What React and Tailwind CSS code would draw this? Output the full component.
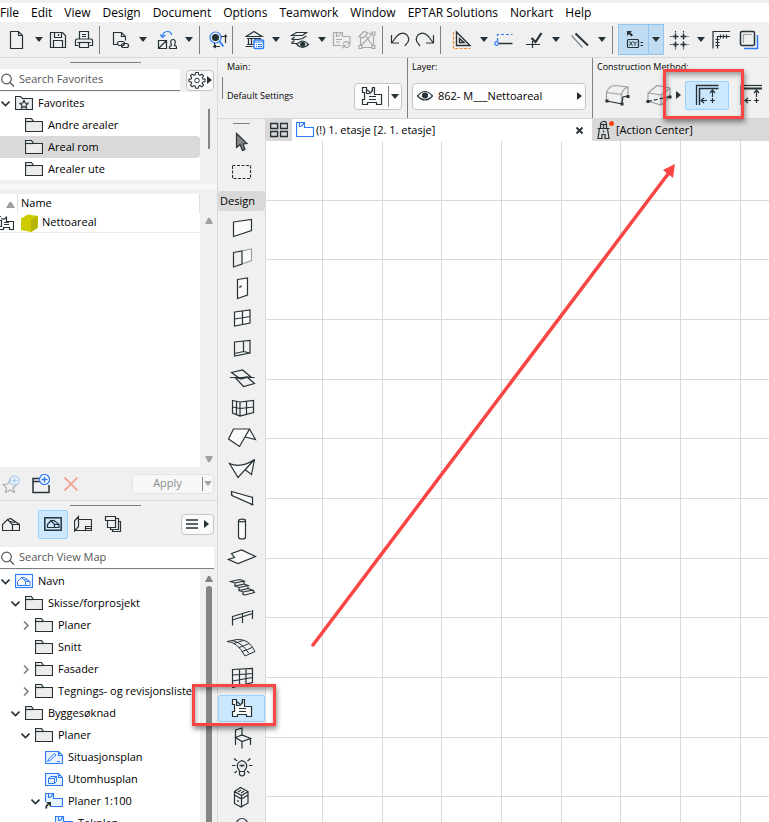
import { clsx } from 'clsx'

const INK = '#263238'
const BLUE = '#2f7df6'

function Svg({ size = 20, w, h, color = INK, className, children }) {
  const width = w || size
  const height = h || size
  return (
    <svg
      width={width}
      height={height}
      viewBox={`0 0 ${width} ${height}`}
      fill="none"
      stroke={color}
      strokeWidth="1.2"
      className={clsx('shrink-0', className)}
      aria-hidden="true"
    >
      {children}
    </svg>
  )
}

function Caret({ color = INK }) {
  return (
    <Svg w={8} h={5} color="none">
      <path d="M0 0h8L4 5z" fill={color} />
    </Svg>
  )
}

function RightCaret() {
  return (
    <Svg w={5} h={8} color="none">
      <path d="M0 0v8L5 4z" fill={INK} />
    </Svg>
  )
}

/* ---------- toolbar ---------- */

const toolbarIcons = {
  file: <path d="M3.5 1.5h8l4 4v13h-12zM11.5 1.5v4h4" />,
  save: <path d="M2.5 2.5h12l3 3v12h-15zM6.5 2.5v5h7v-5M5.5 17.5v-7h9v7M10.5 4v2" />,
  print: (
    <>
      <path d="M5.5 9V1.5h9V9M8 4.5h4M8 6.5h4" />
      <path d="M4.5 15.5h-3v-5q0-1.5 1.5-1.5h14q1.5 0 1.5 1.5v5h-3" />
      <path d="M5.5 12.5h9v5h-9z" />
      <path d="M3.5 12.5h13" />
    </>
  ),
  link: (
    <>
      <path d="M6 14.5H2.5v-12h8l4 4v4M10.5 2.5v4h4" />
      <rect x="6.5" y="11.5" width="7" height="4" rx="2" />
      <rect x="10.5" y="13.5" width="7" height="4" rx="2" />
    </>
  ),
  convert: (
    <>
      <path d="M1.5 10.5h8v8h-8zM1.5 18.5l8-8" />
      <path d="M12.5 18.5v-2l2-1q-2-6 1.500-6t1.500 6l2 1v2z" />
      <path d="M5.500 7q0-5.500 5-5.500q4 0 4 3.500M3 4.500l2.500 3l3-2.500" stroke={BLUE} />
    </>
  ),
  find: (
    <>
      <circle cx="7.500" cy="7.500" r="5.500" stroke={BLUE} />
      <path d="M11.500 11.500l4 5" stroke={BLUE} strokeWidth="1.800" />
      <circle cx="7.500" cy="7.500" r="3" fill={INK} />
      <path d="M17.500 13V6M13 6.500h5M6.500 13v4.500M5 16.500h7" />
      <path d="M5 16.500l3-2v4zM17.500 4l-2 3h4z" fill={INK} stroke="none" />
    </>
  ),
  building: (
    <>
      <path d="M1 6.500L9 1.500l8 5zM2 8.500h14M3.500 9v5M6.500 9v5M10.500 9v2M14.500 9v1M2 14.500h6M0.500 16.500h7" />
      <rect x="9" y="10" width="9.500" height="8.500" rx="1" fill="#fff" stroke={BLUE} strokeWidth="1.500" />
      <path d="M9 12h9.500M11 14.500h1M13 14.500h4M11 16.500h1M13 16.500h4" stroke={BLUE} />
    </>
  ),
  layers: (
    <>
      <path d="M1.500 5.500l5-3h10l-4 3zM1.500 9.500l3-2.500M1.500 9.500h7l4-1l4-2.500M1.500 13l3-2.500M1.500 13.500h6" />
      <path d="M7 14.500q5.500-7 11.500 0q-6 6-11.500 0z" fill="#f0f0f0" />
      <circle cx="12.700" cy="14.300" r="2" fill={INK} />
    </>
  ),
  zoneUpdate: (
    <>
      <path d="M9 15.500H1.500v-13h9v4h7.500v5M4.500 2.500v4q4-.5 4.500-4M4 9.500h6M4 12h4" />
      <path d="M11 14q2-4 6-1.500M18 11v3h-3M18 15q-2 4-6 1.500M11 18.500v-3h3" />
    </>
  ),
  zoneEdit: (
    <>
      <path d="M3.500 8v8M5 17.500h10M16.500 15V5M15 3.500h-3" />
      <path d="M2 6.500l5-5l4 1.500l-5 5zM8.500 5.500L15 15M4 15.500l7-7l4-5" />
      <path d="M15 2h3v3h-3zM15 15.500h3v3h-3zM2 15.500h3v3H2z" />
    </>
  ),
  undo: <path d="M1.500 5v8h7.500M2 12.500L7 6q5-5 10-1q4 5-1 9.500l-1 1.500" />,
  redo: <path d="M18.500 5v8H11M18 12.500L13 6Q8 1 3 5q-4 5 1 9.500L5 16" />,
  triangle: (
    <>
      <path d="M4.500 2v13.500H18zM7.500 8.500v4H12z" strokeWidth="1.400" />
      <path d="M1.500 2v16.500h17" stroke="#f18a2b" strokeDasharray="3 1.500" />
    </>
  ),
  guide: (
    <>
      <path d="M3.500 11V4.500h15" stroke={BLUE} strokeDasharray="3 2" />
      <path d="M4.500 13.500h14" strokeWidth="1.500" />
      <circle cx="2.700" cy="13.500" r="1.800" stroke={BLUE} />
    </>
  ),
  snap: (
    <>
      <path d="M2 14.500h14M8.500 11v7" />
      <path d="M7.500 8l4 4l6-9" strokeWidth="2.200" />
    </>
  ),
  parallel: (
    <>
      <path d="M1.500 5.500l11 12" stroke="#78858b" />
      <path d="M5.500 3.500l12.500 12" strokeWidth="2" />
    </>
  ),
  grid: (
    <>
      <path d="M3.500 6.500h6M11.500 6.500h6M3.500 14.500h6M11.500 14.500h6M6.500 3.500v6M14.500 3.500v6M6.500 11.500v6M14.500 11.500v6" strokeWidth="1.500" />
      <path d="M1 6.500h1.500M18.500 6.500h1M1 14.500h1.500M18.500 14.500h1M6.500 1v1.500M14.500 1v1.500M6.500 18.500v1M14.500 18.500v1" />
    </>
  ),
  ruler: <path d="M2 18.500v-17h17M6.500 18.500V6.500h12.500M9.500 4.500v4M12.500 4.500v4M15.500 4.500v4M4.500 9.500h4M4.500 12.500h4M4.500 15.500h4" />,
  square: (
    <>
      <path d="M5 18.500h13.500V5" stroke={BLUE} strokeWidth="1.500" />
      <rect x="1.500" y="1.500" width="14" height="14" rx="1.500" strokeWidth="1.500" />
      <path d="M4.500 13V4.500H13" stroke="#9aa2a6" />
    </>
  ),
}

const leftTools = [
  { icon: 'file', margin: 'ml-[7px]' },
  { caret: true, margin: 'ml-2' },
  { icon: 'save', margin: 'ml-[5px]' },
  { icon: 'print', margin: 'ml-1.5' },
  { line: true, margin: 'ml-[5px]' },
  { icon: 'link', margin: 'ml-[11px]' },
  { caret: true, margin: 'ml-2' },
  { icon: 'convert', margin: 'ml-2.5' },
  { caret: true, margin: 'ml-2' },
  { line: true, margin: 'ml-1.5' },
  { icon: 'find', margin: 'ml-2' },
  { line: true, margin: 'ml-1' },
  { icon: 'building', margin: 'ml-3' },
  { caret: true, margin: 'ml-[7px]' },
  { icon: 'layers', margin: 'ml-2.5' },
  { caret: true, margin: 'ml-2' },
  { icon: 'zoneUpdate', margin: 'ml-1.5', off: true },
  { icon: 'zoneEdit', margin: 'ml-[5px]', off: true },
  { line: true, margin: 'ml-[5px]' },
  { icon: 'undo', margin: 'ml-[7px]' },
  { icon: 'redo', margin: 'ml-[5px]' },
  { line: true, margin: 'ml-[5px]' },
  { icon: 'triangle', margin: 'ml-[11px]' },
  { caret: true, margin: 'ml-2' },
  { icon: 'guide', margin: 'ml-1.5' },
  { icon: 'snap', margin: 'ml-2.5' },
  { caret: true, margin: 'ml-2' },
  { icon: 'parallel', margin: 'ml-2.5' },
  { caret: true, margin: 'ml-2' },
  { line: true, margin: 'ml-1.5' },
]

const rightTools = [
  { icon: 'grid', margin: 'ml-[5px]' },
  { caret: true, margin: 'ml-2' },
  { icon: 'ruler', margin: 'ml-1.5' },
  { icon: 'square', margin: 'ml-2' },
]

function Tool({ item }) {
  if (item.line) return <span className={clsx('h-7 w-px shrink-0 bg-[#808080]', item.margin)} />
  if (item.caret) {
    return (
      <button type="button" aria-label="More" className={clsx('shrink-0', item.margin)}>
        <Caret />
      </button>
    )
  }
  return (
    <button type="button" aria-label={item.icon} className={clsx('shrink-0', item.margin)}>
      <Svg color={item.off ? '#a9a9a9' : INK}>{toolbarIcons[item.icon]}</Svg>
    </button>
  )
}

function Toolbar() {
  return (
    <div className="flex h-9 shrink-0 items-center border-b border-[#d9d9d9]">
      {leftTools.map((item, i) => (
        <Tool key={i} item={item} />
      ))}
      <div className="ml-[5px] flex h-[31px] shrink-0 border border-[#92c5ee] bg-[#c0dcf3]">
        <button type="button" aria-label="Coordinates" className="flex w-[30px] items-center justify-center border-r border-[#92c5ee]">
          <Svg>
            <path d="M3 1h5l-1.500 1.500l2.500 2.500l-1.500 1.500L5 4L3 6z" fill={INK} stroke="none" />
            <rect x="3.500" y="9.500" width="11" height="8" rx="1" />
            <path d="M5.500 11.500l3 4M8.500 11.500l-3 4M9.500 11.500l1.500 2M13 11.500l-2 2v2M16.500 12.500h2.500M16.500 15.500h2.500" strokeWidth="1" />
          </Svg>
        </button>
        <button type="button" aria-label="More" className="flex w-[14px] items-center justify-center">
          <Caret />
        </button>
      </div>
      {rightTools.map((item, i) => (
        <Tool key={i} item={item} />
      ))}
    </div>
  )
}

const menus = ['File', 'Edit', 'View', 'Design', 'Document', 'Options', 'Teamwork', 'Window', 'EPTAR Solutions', 'Norkart', 'Help']

function MenuBar() {
  return (
    <nav className="mt-[3px] flex h-[19px] shrink-0 items-center gap-3 bg-white text-[12px]">
      {menus.map((m) => (
        <button type="button" key={m} className="shrink-0 whitespace-nowrap">
          {m}
        </button>
      ))}
    </nav>
  )
}

/* ---------- left panels ---------- */

const treeIcons = {
  folder: (
    <>
      <path d="M.5 14.500V1.500h6l2 3h9v10z" fill="#ececec" />
      <path d="M.5 4.500h8" />
    </>
  ),
  favorites: (
    <>
      <path d="M.5 14.500V1.500h5l2 2h10v11z" fill="#ececec" />
      <path d="M9 5.500l1.200 2.500l2.800.3l-2 1.900l.5 2.800L9 11.700l-2.500 1.300l.5-2.800l-2-1.900l2.800-.3z" />
    </>
  ),
  viewMap: (
    <g stroke={BLUE}>
      <rect x=".5" y="1.500" width="17" height="13" />
      <path d="M2.500 12.500V8.500l4-4l4 4v4zM6.500 4.500h3l5.500 4v4h-4.500M10.500 8.500h4.500M8.500 6.500l4 .5" strokeWidth="1" />
    </g>
  ),
  drawing: (
    <g stroke={BLUE}>
      <path d="M.5 2.500h13l4 4v8H.5zM13.500 2.500v4h4" fill="#eaf4fe" />
      <path d="M2.500 12.500l1-2.500l6-5.500l1.500 1.500l-6 5.500zM12 12.500h3" strokeWidth="1" />
    </g>
  ),
  box3d: (
    <g stroke={BLUE}>
      <path d="M.5 2.500h13l4 4v8H.5zM13.500 2.500v4h4" fill="#eaf4fe" />
      <path d="M3.500 7.500h6v5h-6zM3.500 7.500l2-2h6l-2 2M11.500 5.500v5l-2 2" strokeWidth="1" />
    </g>
  ),
  story: (
    <g stroke={BLUE}>
      <path d="M.5 14.500V1.500h8v5h9v8z" fill="#eaf4fe" />
      <path d="M3.500 1.500v4q3.500 0 4-4" />
    </g>
  ),
  storyLink: (
    <g stroke={BLUE}>
      <path d="M.5 13.500V.5h8v5h9v8z" fill="#eaf4fe" />
      <path d="M3.500.5v4q3.500 0 4-4" />
      <path d="M0 9h5.500v7H0z" fill="#fff" stroke="none" />
      <path d="M1.500 15.500q-1-3 2-4.500" stroke={INK} strokeWidth="1.800" />
      <path d="M1 9h5v5z" fill={INK} stroke="none" />
    </g>
  ),
}

const indents = ['pl-0', 'pl-[10px]', 'pl-5', 'pl-[30px]', 'pl-10']

function TreeRow({ level, icon, label, open, selected }) {
  return (
    <li>
      <button
        type="button"
        className={clsx('flex h-[22px] w-full items-center rounded-r-sm text-left', indents[level], selected && 'bg-[#d9d9d9]')}
      >
        <span className="flex w-[15px] shrink-0 pl-px">
          {open !== undefined && (
            <Svg size={9} color={open ? INK : '#808080'}>
              <path d={open ? 'M.5 2.500l4 4l4-4' : 'M3 0.500l4 4l-4 4'} strokeWidth="1.600" />
            </Svg>
          )}
        </span>
        <Svg w={18} h={16}>{treeIcons[icon]}</Svg>
        <span className="ml-[5px] whitespace-nowrap">{label}</span>
      </button>
    </li>
  )
}

const favorites = [
  { level: 0, icon: 'favorites', label: 'Favorites', open: true },
  { level: 1, icon: 'folder', label: 'Andre arealer' },
  { level: 1, icon: 'folder', label: 'Areal rom', selected: true },
  { level: 1, icon: 'folder', label: 'Arealer ute' },
]

const views = [
  { level: 0, icon: 'viewMap', label: 'Navn', open: true },
  { level: 1, icon: 'folder', label: 'Skisse/forprosjekt', open: true },
  { level: 2, icon: 'folder', label: 'Planer', open: false },
  { level: 2, icon: 'folder', label: 'Snitt' },
  { level: 2, icon: 'folder', label: 'Fasader', open: false },
  { level: 2, icon: 'folder', label: 'Tegnings- og revisjonsliste', open: false },
  { level: 1, icon: 'folder', label: 'Byggesøknad', open: true },
  { level: 2, icon: 'folder', label: 'Planer', open: true },
  { level: 3, icon: 'drawing', label: 'Situasjonsplan' },
  { level: 3, icon: 'box3d', label: 'Utomhusplan' },
  { level: 3, icon: 'storyLink', label: 'Planer 1:100', open: true },
  { level: 4, icon: 'story', label: 'Takplan' },
]

function SearchBox({ placeholder }) {
  return (
    <label className="flex h-[22px] flex-1 items-center border-b border-[#7f7f7f] bg-white">
      <Svg size={16} color="#555">
        <circle cx="6.500" cy="7" r="4.800" />
        <path d="M10 10.500l4 4" />
      </Svg>
      <input
        type="search"
        aria-label={placeholder}
        placeholder={placeholder}
        className="ml-[3px] w-full min-w-0 bg-transparent outline-none placeholder:text-[#555]"
      />
    </label>
  )
}

function ScrollArrow({ up, dark }) {
  return (
    <Svg w={8} h={6} color="none">
      <path d={up ? 'M0 6h8L5 0H3z' : 'M0 0h8L5 6H3z'} fill={dark ? '#858585' : '#a0a0a0'} />
    </Svg>
  )
}

function Handle() {
  return <div className="ml-[70px] h-px w-[71px] bg-[#808080]" />
}

function ZoneGlyph() {
  return (
    <Svg w={22} h={20}>
      <path
        d="M5.500 1.500h-4v5h2v7h-2v5h5v-2h9v2h5v-10h-7v-7h-2q0 6-4 6h-2z"
        fill="#fafafa"
      />
      <path d="M5.500 3.500l4 3M11.500 1.500v4M8 10.500h7M8 13.500h7" />
    </Svg>
  )
}

function FavoritesPanel() {
  return (
    <section className="shrink-0 border-b border-[#d9d9d9]">
      <div className="pt-1">
        <Handle />
      </div>
      <div className="mt-1.5 flex items-center">
        <SearchBox placeholder="Search Favorites" />
        <button type="button" aria-label="Favorites settings" className="mr-[3px] ml-1.5 flex h-[21px] w-7 items-center justify-center gap-px rounded border border-[#c6c6c6] bg-[#fafafa]">
          <Svg size={18}>
            <path
              d="M7.800 1.500h2.400l.5 2.200l1.300.6l1.900-1.200l1.600 1.600l-1.200 1.900l.6 1.300l2.100.4v2.200l-2.100.5l-.6 1.300l1.200 1.900l-1.600 1.600l-1.900-1.200l-1.300.6l-.5 2.100H7.800l-.5-2.100l-1.300-.6l-1.900 1.200l-1.600-1.600l1.200-1.900l-.6-1.300L1 10.500V8.300l2.100-.4l.6-1.300l-1.200-1.900l1.600-1.600l1.900 1.200l1.300-.6z"
              strokeWidth="1.100"
            />
            <circle cx="9" cy="9.500" r="2.300" strokeWidth="1" />
          </Svg>
          <RightCaret />
        </button>
      </div>
      <div className="mt-px flex">
        <ul className="min-w-0 flex-1 bg-white">
          {favorites.map((row) => (
            <TreeRow key={row.label} {...row} />
          ))}
        </ul>
        <div className="flex w-[17px] justify-center pt-[17px]">
          <div className="h-10 w-0.5 bg-[#858585]" />
        </div>
      </div>
      <div className="mt-1 mb-[5px] h-[5px] bg-[#f8f8f8]" />
      <div className="flex h-[273px]">
        <div className="min-w-0 flex-1 bg-white">
          <div className="flex h-[19px] items-center border-r border-[#e0e0e0]">
            <span className="flex w-[18px] justify-end self-stretch border-r border-[#e5e5e5] pt-2 pr-0.5">
              <Svg w={9} h={6} color="none">
                <path d="M0 6h9L5.500 0h-2z" fill="#a0a0a0" />
              </Svg>
            </span>
            <span className="ml-[3px]">Name</span>
          </div>
          <button type="button" className="flex h-5 w-full items-center border-b border-[#ececec] text-left">
            <Svg w={14} h={16}>
              <path d="M0 1.500h1M6.500 1.500v5h7v8h-4v-2h-6v2H0M0 5.500h1.500v6H0M1 3.500q4 2 5.500-2M4 7.500h5M4 9.500h5" />
            </Svg>
            <Svg w={20} h={18} color="none" className="ml-[7px]">
              <path d="M0 4.500L7 .5l10 1.500l-.5 12L10 18L0 16z" fill="#cccb00" />
              <path d="M10 6l7-4l-.5 12L10 18z" fill="#b5b400" />
            </Svg>
            <span className="ml-px">Nettoareal</span>
          </button>
        </div>
        <div className="flex w-[17px] flex-col items-center justify-between pt-6 pb-[5px]">
          <ScrollArrow up />
          <ScrollArrow />
        </div>
      </div>
      <div className="flex h-[33px] items-center pr-[3px] pl-[2px]">
        <button type="button" aria-label="New favorite" disabled>
          <Svg size={18} color="#a9b0b3">
            <path d="M8 4.500l2 4.500l5 .5l-4 3.500l1.500 4.500L8 15l-4.500 2.500L4.500 13L1 9.500l5-.5z" />
            <circle cx="12.500" cy="5.500" r="4.500" fill="#f0f0f0" stroke="#9ec6fb" />
            <path d="M12.500 3v5M10 5.500h5" stroke="#9ec6fb" />
          </Svg>
        </button>
        <button type="button" aria-label="New folder" className="ml-3">
          <Svg size={20}>
            <path d="M8 4.500H1v14h16V11M1 7.500h7" strokeWidth="1.500" />
            <circle cx="12.500" cy="5.500" r="5" fill="#fff" stroke={BLUE} />
            <path d="M12.500 2.500v6M9.500 5.500h6" stroke={BLUE} strokeWidth="1.500" />
          </Svg>
        </button>
        <button type="button" aria-label="Delete" className="ml-3" disabled>
          <Svg size={14} color="#f7a292">
            <path d="M.5 .5l13 13M13.500 .5l-13 13" strokeWidth="1.800" />
          </Svg>
        </button>
        <div className="ml-auto flex h-5 w-[82px] rounded-sm border border-[#e3e3e3] bg-[#f8f8f8]">
          <button type="button" className="flex-1 text-[#8c8c8c]" disabled>
            Apply
          </button>
          <button type="button" aria-label="Apply options" className="my-0.5 border-l border-[#8c8c8c] px-px" disabled>
            <Caret color="#a0a0a0" />
          </button>
        </div>
      </div>
    </section>
  )
}

function ViewMapPanel() {
  return (
    <section className="flex min-h-0 flex-1 flex-col">
      <div className="pt-1">
        <Handle />
      </div>
      <div className="mt-[3px] flex h-[30px] shrink-0 items-center pr-[3px] pl-[2px]">
        <button type="button" aria-label="Project map">
          <Svg size={18}>
            <path d="M.5 15.500v-6l5-5l5 5v6zM5.500 4.500l3-1l9 6v6h-7M10.500 9.500h7M8 6.500l5 1" />
          </Svg>
        </button>
        <button type="button" aria-label="View map" className="ml-[18px] flex h-[29px] w-[30px] items-center justify-center rounded-xs border border-[#99d1ff] bg-[#cce8ff]">
          <Svg size={18}>
            <rect x=".8" y="2.800" width="16.400" height="12.400" strokeWidth="1.500" />
            <path d="M3.500 12.500v-3l3.500-4l3.500 4v3zM7 5.500h3l5 4v3h-4.500M10.500 9.500h4.500" />
          </Svg>
        </button>
        <button type="button" aria-label="Layout book" className="ml-1.5">
          <Svg size={18}>
            <path d="M.5 6l4-4.500v10L.5 16zM4.500 4.500h13v11h-16M11.500 15.500v-4h6M11.500 13.500h6" />
          </Svg>
        </button>
        <button type="button" aria-label="Publisher" className="ml-3">
          <Svg size={18}>
            <path d="M1.500 1.500h10v4h-10zM3.500 5.500v7h8v-7M11.500 3.500h3v11h-8v-2M14.500 6.500h2v10h-8v-2" />
          </Svg>
        </button>
        <button type="button" aria-label="View map menu" className="ml-auto flex h-[21px] w-[33px] items-center justify-center gap-1.5 rounded border border-[#c6c6c6] bg-[#fafafa]">
          <Svg w={12} h={10}>
            <path d="M0 1h12M0 5h12M0 9h12" strokeWidth="1.400" />
          </Svg>
          <RightCaret />
        </button>
      </div>
      <div className="mt-2 mr-[3px] flex shrink-0">
        <SearchBox placeholder="Search View Map" />
      </div>
      <div className="mt-px flex min-h-0 flex-1">
        <ul className="min-w-0 flex-1 overflow-hidden bg-white">
          {views.map((row, i) => (
            <TreeRow key={i} {...row} />
          ))}
        </ul>
        <div className="flex w-[17px] flex-col items-center gap-1 pt-1.5">
          <ScrollArrow up dark />
          <div className="w-1.5 flex-1 rounded-t bg-[#858585]" />
        </div>
      </div>
    </section>
  )
}

/* ---------- info box ---------- */

function Marker({ className }) {
  return (
    <span
      className={clsx(
        'pointer-events-none absolute z-10 border-3 border-[#fa4545] shadow-[1px_3px_5px_rgba(0,0,0,0.45),inset_1px_3px_5px_rgba(0,0,0,0.35)]',
        className,
      )}
    />
  )
}

function InfoBox() {
  return (
    <div className="flex h-[61px] shrink-0 border-b border-[#d9d9d9] text-[9px]">
      <div className="flex w-[189px] shrink-0 pl-1">
        <span className="mt-[19px] h-[22px] w-px bg-[#808080]" />
        <div className="ml-1 flex flex-1 flex-col pt-0.5">
          <span>Main:</span>
          <div className="mt-[9px] flex items-center justify-between pr-[5px]">
            <span>Default Settings</span>
            <div className="flex h-[27px] w-12 rounded border border-[#c6c6c6] bg-[#fdfdfd]">
              <button type="button" aria-label="Zone settings" className="flex flex-1 items-center justify-center">
                <ZoneGlyph />
              </button>
              <button type="button" aria-label="More" className="my-0.5 border-l border-[#808080] px-0.5">
                <Caret />
              </button>
            </div>
          </div>
        </div>
      </div>
      <div className="w-[185px] shrink-0 border-l border-[#808080] pt-0.5 pl-1">
        <span>Layer:</span>
        <button type="button" className="mt-[9px] flex h-[27px] w-[174px] items-center rounded border border-[#c6c6c6] bg-[#fdfdfd] pr-[3px] pl-1 text-[11px]">
          <Svg w={16} h={12}>
            <path d="M.5 6q7.500-9 15 0q-7.500 8-15 0z" />
            <circle cx="8" cy="5.500" r="2.500" fill={INK} />
          </Svg>
          <span className="mr-auto ml-[5px]">862- M___Nettoareal</span>
          <RightCaret />
        </button>
      </div>
      <div className="min-w-0 flex-1 border-l border-[#808080] pt-0.5 pl-1">
        <span>Construction Method:</span>
        <div className="mt-[7px] flex items-center">
          <button type="button" aria-label="Manual" className="ml-2 shrink-0">
            <Svg w={26} h={24}>
              <path d="M1.500 17V9.500Q4 2.500 10 2.500l13 1.500v10M1.500 9.500l15 2V21M16.500 11.500q1-5.500 6.500-7.500" stroke="#9aa0a3" />
              <path d="M2 18l15 3M17 20l1-6l5-1" />
              <path d="M.5 16.500h3v3h-3zM15.500 19.500h3v3h-3zM21.500 12h3v3h-3z" fill={INK} stroke="none" />
            </Svg>
          </button>
          <button type="button" aria-label="Inner edge" className="ml-[15px] flex shrink-0 items-center gap-1">
            <Svg w={26} h={24}>
              <path d="M2 18v-8l9-7.500l13 2.500v9l-9 8l-13-4M2 10l13 2v10M15 12l9-7" stroke="#9aa0a3" />
              <path d="M2 18.500l22-5" strokeDasharray="4 2" />
              <path d="M.5 17h3v3h-3zM22.500 12.500h3v3h-3z" fill={INK} stroke="none" />
            </Svg>
            <RightCaret />
          </button>
          <div className="relative ml-1 shrink-0">
            <button type="button" aria-label="Reference line" className="flex h-[29px] w-11 items-center justify-center rounded-xs border border-[#99d1ff] bg-[#cce8ff]">
              <EdgeGlyph />
            </button>
            <Marker className="-top-3 -left-[22px] h-[50px] w-[81px]" />
          </div>
          <button type="button" aria-label="Outer edge" className="ml-2.5 shrink-0">
            <EdgeGlyph bold />
          </button>
        </div>
      </div>
    </div>
  )
}

function EdgeGlyph({ bold }) {
  return (
    <Svg w={24} h={22}>
      {bold ? (
        <>
          <path d="M1 1.500h22" />
          <path d="M3 4.500h20" strokeWidth="2" />
          <path d="M1.500 1v20" stroke="#8a9093" />
        </>
      ) : (
        <>
          <path d="M1.500 21V1.500h22" strokeWidth="1.300" />
          <path d="M4.500 21V4.500h19" strokeWidth="1.500" />
        </>
      )}
      <path d="M17.500 6v7M6 16.500h6M15 16.500h5M17.500 14v5" />
      <path d="M15 9l2.500-3l2.500 3M9 14l-3 2.500l3 2.500" />
    </Svg>
  )
}

/* ---------- toolbox ---------- */

const toolbox = [
  { name: 'Wall', art: <path d="M6.500 9l18-2.500v11l-18 6z" fill="#fafafa" /> },
  {
    name: 'Partial wall',
    art: (
      <>
        <path d="M15 8l9.500-2v11.500L15 21" stroke="#9aa0a3" fill="#fafafa" />
        <path d="M6.500 9.500l8.500-1.500v13l-8.500 3z" />
      </>
    ),
  },
  { name: 'Door', art: <path d="M10.500 6.500l10-1.500v17l-10 3.500zM13 15v-1.500l2-.5" fill="#fafafa" /> },
  { name: 'Window', art: <path d="M7.500 9l15.500-2v13l-15.500 3zM15.500 8v13.500M7.500 16l15.500-2.500" fill="#fafafa" /> },
  { name: 'Corner window', art: <path d="M7.500 9L23 7.500v12.500l-15.500 3zM16.500 8v10.500M7.500 20.500l9-2l6.500 1.500" /> },
  {
    name: 'Skylight',
    art: (
      <>
        <path d="M4.500 9.500l11-2.500l8 6.500l-10 2.500z" />
        <path d="M9 15.500l11-1.500l7.500 6.500l-11 3zM3 14.500h24.500" />
      </>
    ),
  },
  { name: 'Curtain wall', art: <path d="M5.500 7.500L13 9l13.500-1.500v12L13 23l-7.500-3zM13 9v14M9.500 8.500v13M19.500 8.500v13M5.500 14l7.500 1.500l13.500-1.500" /> },
  { name: 'Roof', art: <path d="M6.500 6h16L12.500 23.500L1.500 16zM22.500 6l6 10.500L18 14" fill="#fafafa" /> },
  { name: 'Shell', art: <path d="M2.500 10.500q12 5 25-4l-16.500 18zM27.500 6.500l-3 15l-6-4.500" fill="#fafafa" /> },
  { name: 'Beam', art: <path d="M4.500 8.500l21 6v7l-20.500-9zM4.500 8v4.500M25.500 13.500v9M4.500 12.500h2M23.500 21.500h3" fill="#fafafa" /> },
  {
    name: 'Column',
    art: (
      <>
        <path d="M11.500 7.500V24q0 2 3.500 2t3.500-2V7.500" fill="#fafafa" />
        <ellipse cx="15" cy="7.500" rx="3.500" ry="1.300" />
      </>
    ),
  },
  { name: 'Slab', art: <path d="M4.500 10.500l10-3.500l14 6.500l-17.500 7l-9.500-4l6-2z" fill="#fafafa" /> },
  {
    name: 'Stair',
    art: (
      <path d="M3.500 8.500l9.500-2l4 1.500l-9 2zM8 10v3l9-2V8M8 13l4 1.500l9-2l-4-1.500M12 14.500v3l9-2v-3M12 17.500l4 1.500l9.500-2l-4.500-1.500M16 19v2.500l2 .5l9.500-2.500l-2-2.500" />
    ),
  },
  { name: 'Railing', art: <path d="M5.500 13.500l20-6M5.500 17l20-6.500M5.500 13v9.500M15.500 10.500V20M25.500 7v9" /> },
  { name: 'Mesh', art: <path d="M0 8.500q10 0 18 14.500l10-4.500Q22 5.500 10 6.500zM5 7.500q10 2 17 13M7 10.500q6-2 9-3M12 14.500q6-2 10-4M15 18.500q6-2 10-4" strokeWidth="1" /> },
  { name: 'Morph', art: <path d="M5.500 6.500l20-1v14l-20 5zM12.500 6v16.500M19 6v15M5.500 12l20-1.500M5.500 18l20-3.500" /> },
  { name: 'Zone' },
  { name: 'Object', art: <path d="M8.500 22V7l6.500-2v8M8.500 14.500l6.500-2.500l8.500 3.500l-8.500 3zM15 18.500v7M23.500 15.500v6.500" /> },
  {
    name: 'Lamp',
    art: (
      <>
        <path d="M12.500 18.500q0-1.500-1.500-3q-2.500-5.500 4-8q6.500 2.500 4 8q-1.500 1.500-1.500 3zM12.500 18.500v3q2.500 3 5 0v-3M12.500 13l1.500-1l1 1.500l1-1.500l1.500 1" />
        <path d="M5 12.500h3.500M22 12.500h3.500M7 5.500l3 2.500M23.500 5.500l-3 2.500M7.500 20l2.500-2M22.500 20l-2.500-2" />
      </>
    ),
  },
  { name: 'Equipment', art: <path d="M7.500 8.500l6-4l7.500 4v11.500l-7 4l-6.500-3.500zM7.500 8.500l7 4l6.500-4M14.500 12.500v11M7.500 12l7 4l6.500-4M11 9l3-2M14 10l3-2M11 17v2" /> },
  { name: 'More', art: <circle cx="15" cy="11" r="5.500" /> },
]

function Toolbox() {
  return (
    <aside className="flex w-12 shrink-0 flex-col border-r border-[#d9d9d9]">
      <div className="mx-auto mt-1 h-px w-[17px] shrink-0 bg-[#808080]" />
      <button type="button" aria-label="Arrow" className="mt-[3px] flex h-[30px] shrink-0 items-center justify-center">
        <Svg w={14} h={20}>
          <path d="M1.500 1.500v14l3.500-3l2.500 6l2.500-1l-2-5.500l4-.5z" fill="#858585" />
        </Svg>
      </button>
      <button type="button" aria-label="Marquee" className="flex h-[30px] shrink-0 items-center justify-center">
        <Svg w={20} h={16}>
          <rect x=".5" y="1.500" width="18" height="13" strokeDasharray="3 1.500" />
        </Svg>
      </button>
      <button type="button" className="mt-1 mb-0.5 h-5 shrink-0 rounded bg-[#d9d9d9] pl-0.5 text-left">
        Design
      </button>
      {toolbox.map((t) =>
        t.name === 'Zone' ? (
          <div key={t.name} className="relative flex h-[30px] shrink-0 items-center">
            <button type="button" aria-label={t.name} className="flex h-[27px] w-full items-center justify-center rounded-xs border border-[#99d1ff] bg-[#cce8ff]">
              <ZoneGlyph />
            </button>
            <Marker className="-top-[9px] -left-[26px] h-[42px] w-[84px]" />
          </div>
        ) : (
          <button type="button" key={t.name} aria-label={t.name} className="flex h-[30px] shrink-0 items-center justify-center">
            <Svg size={30}>{t.art}</Svg>
          </button>
        ),
      )}
    </aside>
  )
}

/* ---------- drawing area ---------- */

const PITCH = 59.65
const lines = Array.from({ length: 40 }, (_, i) => i)

function Canvas() {
  return (
    <main className="flex min-w-0 flex-1 flex-col">
      <div className="flex h-[22px] shrink-0 bg-[#d9d9d9]">
        <button type="button" aria-label="Tab overview" className="flex w-[26px] shrink-0 items-center justify-center">
          <Svg w={18} h={16}>
            <path d="M.6 1.500h7v5h-7zM10.600 1.500h7v5h-7zM.6 9.500h7v5h-7zM10.600 9.500h7v5h-7z" strokeWidth="1.400" />
          </Svg>
        </button>
        <div className="flex w-[300px] shrink-0 items-center bg-white pr-2 pl-1">
          <Svg w={18} h={16} color={BLUE}>
            <path d="M.5 14.500V.5h8v5h9v9zM3.500.5v4q3.500 0 4-4" />
          </Svg>
          <button type="button" className="mr-auto ml-0.5 text-[11px]">
            (!) 1. etasje [2. 1. etasje]
          </button>
          <button type="button" aria-label="Close tab">
            <Svg size={9}>
              <path d="M1.500 1.500l6 6M7.500 1.500l-6 6" strokeWidth="1.800" />
            </Svg>
          </button>
        </div>
        <button type="button" className="flex items-center pl-1 text-[11px]">
          <Svg w={18} h={20}>
            <path d="M3.500 8.500L2 18.500h4v-4h3v4h4l-1.500-10M1.500 8.500h12M4.500 8V4.500h6V8M4.500 4.500q0-2.500 3-3t3 3M7.500 4.500v4M7.500 10.500v2" />
            <circle cx="15.500" cy="3.500" r="2.500" fill="#fc4419" stroke="none" />
          </Svg>
          <span className="ml-0.5">[Action Center]</span>
        </button>
      </div>
      <div className="relative flex-1 overflow-hidden bg-white">
        <svg className="absolute inset-0 h-full w-full" aria-hidden="true">
          <g fill="#d9d9d9">
            {lines.map((i) => (
              <rect key={`v${i}`} x={Math.round(56 + i * PITCH)} y="0" width="1" height="100%" />
            ))}
            {lines.map((i) => (
              <rect key={`h${i}`} x="0" y={Math.round(i * PITCH) - 1} width="100%" height="1" />
            ))}
          </g>
          <path d="M47 504L402 33" stroke="#fa4545" strokeWidth="3.500" strokeLinecap="round" />
          <path d="M409 23l-2 14l-10-8z" fill="#fa4545" />
        </svg>
      </div>
    </main>
  )
}

export default function App() {
  return (
    <div className="flex h-screen flex-col overflow-hidden bg-[#f0f0f0] font-['Open_Sans','Noto_Sans',sans-serif] text-[11px] text-black">
      <MenuBar />
      <Toolbar />
      <div className="flex min-h-0 flex-1">
        <div className="flex w-[218px] shrink-0 flex-col border-r border-[#d9d9d9]">
          <FavoritesPanel />
          <ViewMapPanel />
        </div>
        <div className="flex min-w-0 flex-1 flex-col">
          <InfoBox />
          <div className="flex min-h-0 flex-1">
            <Toolbox />
            <Canvas />
          </div>
        </div>
      </div>
    </div>
  )
}
